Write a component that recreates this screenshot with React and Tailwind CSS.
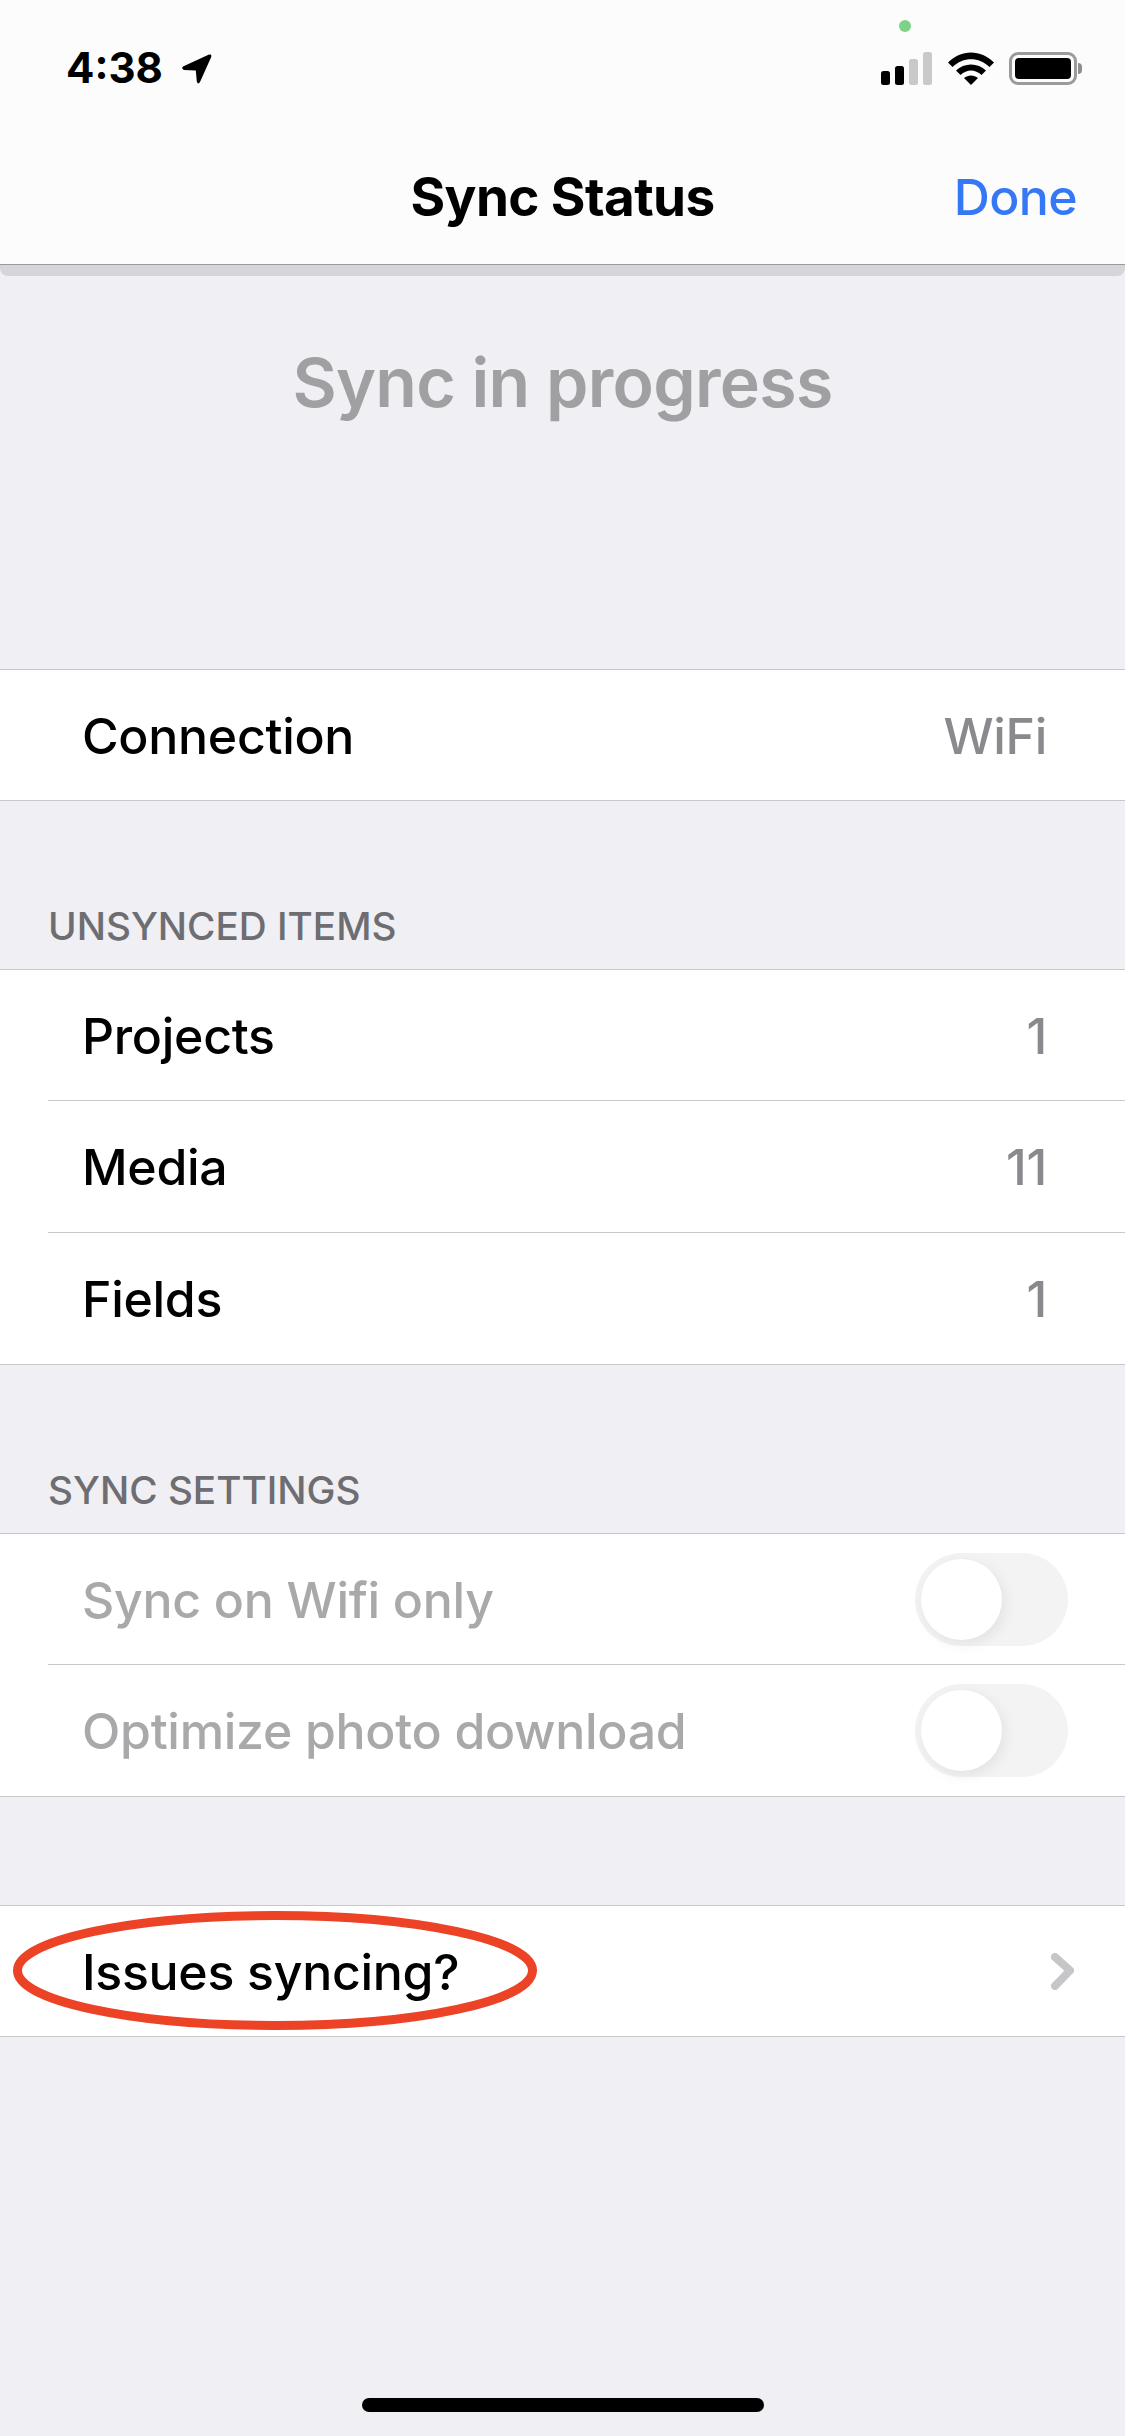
import React from 'react';

const SF = "font-['Inter',sans-serif]";

const Row = ({ label, value, divider, muted, height = 'h-[131px]', children }) => (
    <div className="pl-[48px] bg-white">
        <div className={`${height} flex items-center justify-between pr-[78px] ${divider ? 'border-b border-[#c8c7cc]' : ''}`}>
            <span className={`pl-[34px] mt-[2px] text-[50px] tracking-[-0.3px] font-[450] ${muted ? 'text-[#a9a9ab]' : 'text-black'}`}>{label}</span>
            {value && <span className="mt-[2px] text-[50px] tracking-[-0.3px] font-[450] text-[#8a8a8e]">{value}</span>}
            {children}
        </div>
    </div>
);

const Group = ({ children }) => (
    <div className="bg-white border-y border-[#c8c7cc]">{children}</div>
);

const SectionLabel = ({ children }) => (
    <div className="pt-[106px] pb-[24px] pl-[48px] text-[38.7px] leading-[38px] font-medium text-[#6d6d72]">{children}</div>
);

const Toggle = () => (
    <div className="relative -mr-[21px] w-[153px] h-[93px] rounded-full bg-[#f3f3f4]">
        <div className="absolute left-[6px] top-[6px] w-[81px] h-[81px] rounded-full bg-white shadow-[3px_4px_14px_rgba(0,0,0,0.07)]" />
    </div>
);

const StatusBar = () => (
    <div className="relative h-[120px] flex items-start justify-between pl-[66px] pr-[43px] pt-[52px]">
        <div className="flex items-center gap-[19px] -mt-[4px]">
            <span className="text-[42px] leading-[40px] font-bold text-black">4:38</span>
            <svg width="30" height="30" viewBox="0 0 30 30" className="mt-[2px]">
                <path d="M1 12.5 L26.5 0.8 Q30 -0.5 29.2 3 L18 28 Q16 31 14.8 27.5 L13.8 16.5 L2 16 Q-1 14.5 1 12.5 Z" fill="#000" />
            </svg>
        </div>
        <div className="absolute left-[899px] top-[20px] w-[12px] h-[12px] rounded-full bg-[#7ed287]" />
        <div className="flex items-end gap-[15px]">
            <svg width="52" height="33" viewBox="0 0 52 33">
                <rect x="0" y="19" width="9" height="14" rx="2.5" fill="#000" />
                <rect x="14" y="14" width="9" height="19" rx="2.5" fill="#000" />
                <rect x="28" y="7" width="9" height="26" rx="2.5" fill="#c9c9c9" />
                <rect x="42" y="0" width="9" height="33" rx="2.5" fill="#c9c9c9" />
            </svg>
            <svg width="46" height="33" viewBox="0 0 46 33">
                <path d="M0 10.5 C13 -3 33 -3 46 10.5 L41.5 15 C31 4.5 15 4.5 4.5 15 Z" fill="#000" />
                <path d="M8 18.5 C16 10.5 30 10.5 38 18.5 L33.5 23 C27 17 19 17 12.5 23 Z" fill="#000" />
                <path d="M16 26 C20 22.5 26 22.5 30 26 L23 33 Z" fill="#000" />
            </svg>
            <div className="flex items-center">
                <div className="w-[68px] h-[33px] rounded-[9px] border-[3px] border-[#9b9b9b] p-[3px]">
                    <div className="w-full h-full rounded-[4px] bg-black" />
                </div>
                <div className="w-[4px] h-[11px] rounded-r-full bg-[#8e8e8e] ml-[1px]" />
            </div>
        </div>
    </div>
);

const App = () => {
    return (
        <div className={`relative w-[1125px] h-[2436px] overflow-hidden bg-[#efeff4] ${SF}`}>
            {/* Nav bar */}
            <header className="h-[265px] bg-[#fcfcfd] border-b border-[#9a9a9c]">
                <StatusBar />
                <div className="relative h-[144px] flex items-center justify-center">
                    <span className="text-[53px] font-bold tracking-[-0.6px] text-black mt-[12px]">Sync Status</span>
                    <span className="absolute right-[48px] top-[52px] text-[50px] leading-[50px] tracking-[-0.6px] font-[450] text-[#3478f6]">Done</span>
                </div>
            </header>
            <div className="h-[11px] bg-[#d6d5db] rounded-b-[8px]" />

            <div className="h-[393px] pt-[66px] text-center text-[68px] leading-[80px] font-semibold tracking-[-0.7px] text-[#a0a0a3]">
                Sync in progress
            </div>

            <Group>
                <Row label="Connection" value="WiFi" height="h-[130px]" />
            </Group>

            <SectionLabel>UNSYNCED ITEMS</SectionLabel>
            <Group>
                <Row label="Projects" value="1" divider />
                <Row label="Media" value="11" divider height="h-[132px]" />
                <Row label="Fields" value="1" />
            </Group>

            <SectionLabel>SYNC SETTINGS</SectionLabel>
            <Group>
                <Row label="Sync on Wifi only" muted divider>
                    <Toggle />
                </Row>
                <Row label="Optimize photo download" muted>
                    <Toggle />
                </Row>
            </Group>

            <div className="h-[108px]" />
            <Group>
                <Row label="Issues syncing?" height="h-[130px]">
                    <svg width="23" height="37" viewBox="0 0 23 37" className="-mr-[27px]">
                        <path d="M4 4 L19 17.5 L4 33" fill="none" stroke="#c6c6c8" strokeWidth="8" strokeLinecap="round" strokeLinejoin="round" />
                    </svg>
                </Row>
            </Group>

            {/* Red annotation around the row label */}
            <svg className="absolute left-[10px] top-[1908px]" width="530" height="125" viewBox="0 0 530 125">
                <ellipse cx="265" cy="62.5" rx="257.5" ry="55" fill="none" stroke="#ec4226" strokeWidth="9" />
            </svg>

            {/* Home indicator */}
            <div className="absolute left-[362px] top-[2398px] w-[402px] h-[14px] rounded-full bg-black" />
        </div>
    );
};

export default App;
